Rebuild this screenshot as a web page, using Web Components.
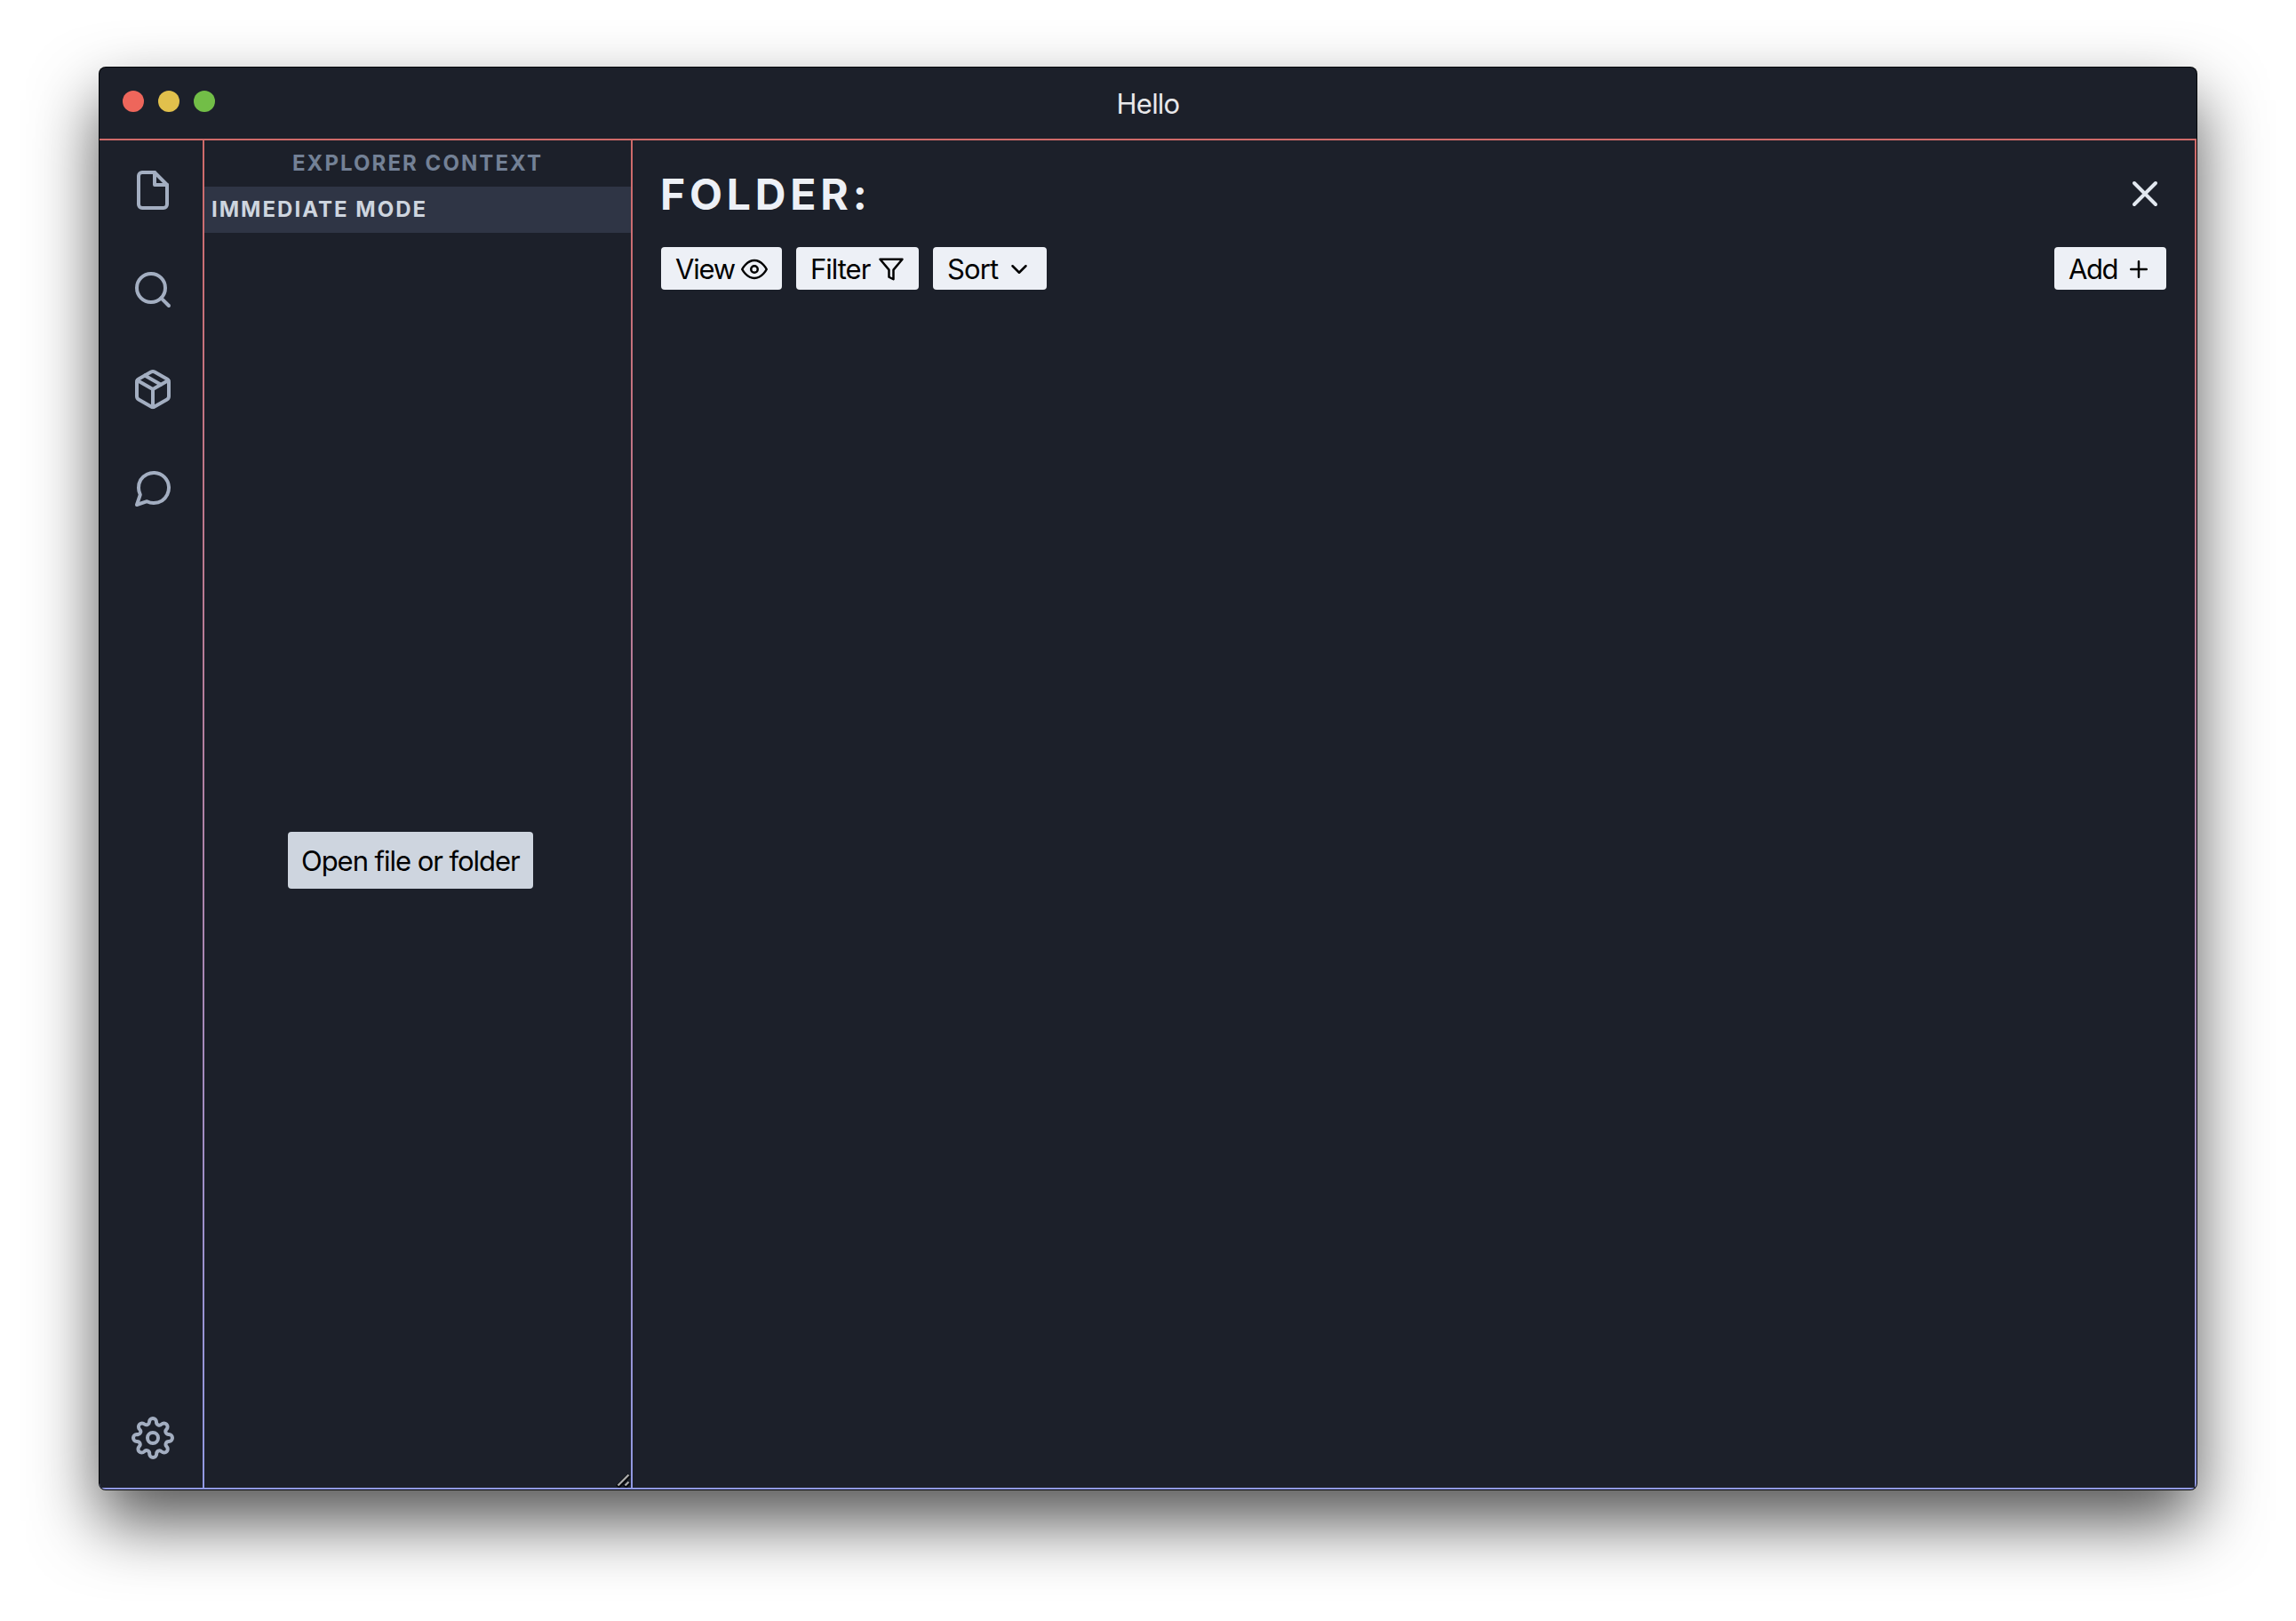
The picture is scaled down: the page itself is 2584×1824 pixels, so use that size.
<!DOCTYPE html>
<html lang="en"><head><meta charset="utf-8"><title>Hello</title>
<style>
html,body{margin:0;height:100%;background:#fff}
body{box-sizing:border-box;padding:76px 112px 148px;font-family:Inter,"Liberation Sans",sans-serif;font-size:31px;overflow:hidden}
</style></head><body>
<app-window></app-window>
<script>
const ICONS={
file:'<path d="M13 2H6a2 2 0 0 0-2 2v16a2 2 0 0 0 2 2h12a2 2 0 0 0 2-2V9z"/><path d="M13 2v7h7"/>',
search:'<circle cx="11" cy="11" r="8"/><path d="M21 21l-4.35-4.35"/>',
box:'<path d="M16.5 9.4l-9-5.19M21 16V8a2 2 0 0 0-1-1.73l-7-4a2 2 0 0 0-2 0l-7 4A2 2 0 0 0 3 8v8a2 2 0 0 0 1 1.73l7 4a2 2 0 0 0 2 0l7-4A2 2 0 0 0 21 16z"/><path d="M3.27 6.96L12 12.01l8.73-5.05M12 22.08V12"/>',
chat:'<path d="M21 11.5a8.38 8.38 0 0 1-.9 3.8 8.5 8.5 0 0 1-7.6 4.7 8.38 8.38 0 0 1-3.8-.9L3 21l1.9-5.7a8.38 8.38 0 0 1-.9-3.8 8.5 8.5 0 0 1 4.7-7.6 8.38 8.38 0 0 1 3.8-.9h.5a8.48 8.48 0 0 1 8 8z"/>',
gear:'<circle cx="12" cy="12" r="3"/><path d="M19.4 15a1.65 1.65 0 0 0 .33 1.82l.06.06a2 2 0 1 1-2.83 2.83l-.06-.06a1.65 1.65 0 0 0-2.8 1.17V21a2 2 0 0 1-4 0v-.09a1.65 1.65 0 0 0-2.91-1.26l-.06.06a2 2 0 1 1-2.83-2.83l.06-.06A1.65 1.65 0 0 0 3.09 14H3a2 2 0 0 1 0-4h.09A1.65 1.65 0 0 0 4.6 7.18l-.06-.06a2 2 0 1 1 2.83-2.83l.06.06A1.65 1.65 0 0 0 10 3.09V3a2 2 0 0 1 4 0v.09a1.65 1.65 0 0 0 2.82 1.26l.06-.06a2 2 0 1 1 2.83 2.83l-.06.06A1.65 1.65 0 0 0 20.91 10H21a2 2 0 0 1 0 4h-.09a1.65 1.65 0 0 0-1.51 1z"/>',
eye:'<path d="M1 12s4-8 11-8 11 8 11 8-4 8-11 8-11-8-11-8z"/><circle cx="12" cy="12" r="3"/>',
filter:'<path d="M22 3H2l8 9.46V19l4 2v-8.54z"/>',
down:'<path d="M6 9l6 6 6-6"/>',
plus:'<path d="M12 5v14M5 12h14"/>',
close:'<path d="M18 6L6 18M6 6l12 12"/>'};
function define(name,render){customElements.define(name,class extends HTMLElement{connectedCallback(){if(!this.shadowRoot)this.attachShadow({mode:'open'}).innerHTML=render(this)}})}
define('ui-icon',e=>`<style>:host{display:block;flex:none;width:var(--size,48px);height:var(--size,48px)}svg{display:block;width:100%;height:100%;overflow:visible;fill:none;stroke:currentColor;stroke-width:2;stroke-linecap:round;stroke-linejoin:round}</style><svg viewBox="0 0 24 24">${ICONS[e.getAttribute('name')]}</svg>`);
define('tool-button',e=>`<style>:host{display:flex;align-items:center;gap:8px;height:48px;padding:0 16px;border-radius:4px;box-sizing:border-box;background:#edf0f6;color:#000}span{width:var(--w);letter-spacing:var(--ls);white-space:nowrap}ui-icon{--size:30px;margin-top:2px}</style><span><slot></slot></span><ui-icon name="${e.getAttribute('icon')}"></ui-icon>`);
define('title-bar',()=>`<style>:host{display:grid;grid-template-columns:1fr auto 1fr;align-items:center;height:80px;flex:none;color:#e8e8ea}.l{display:flex;gap:16px;padding:0 0 4px 26px}i{width:24px;height:24px;border-radius:50%}span{letter-spacing:-.78px}</style><div class="l"><i style="background:#ee665b"></i><i style="background:#e1c04c"></i><i style="background:#72be47"></i></div><span><slot></slot></span>`);
define('activity-bar',()=>`<style>:host{display:flex;flex-direction:column;gap:64px;width:116px;box-sizing:border-box;padding:32px 0 32px 36px;color:#a3aec1}.end{margin-top:auto}</style><ui-icon name="file"></ui-icon><ui-icon name="search"></ui-icon><ui-icon name="box"></ui-icon><ui-icon name="chat"></ui-icon><ui-icon class="end" name="gear"></ui-icon>`);
define('explorer-pane',()=>`<style>:host{display:flex;flex-direction:column;position:relative;width:480px}header,.mode{height:52px;line-height:52px;font-size:24px;font-weight:700}header{text-align:center;color:#738196;letter-spacing:2.07px}.mode{background:#2f3545;color:#ced5df;padding-left:8px;letter-spacing:2.01px}.body{flex:1;display:flex;align-items:center;justify-content:center;padding-right:16px}button{font:inherit;white-space:nowrap;text-align:left;letter-spacing:-1.04px;border:0;border-radius:4px;width:276px;height:64px;padding:0 0 0 15px;background:#ced5df;color:#000}svg{position:absolute;right:0;bottom:0}</style>
<header>EXPLORER CONTEXT</header><div class="mode">IMMEDIATE MODE</div><div class="body"><button>Open file or folder</button></div><svg width="18" height="18" fill="none"><path d="M3 17L16 4M11 17l5-5" stroke="#06080c" stroke-width="5"/><path d="M3.5 15.5L15.5 3.5M11.5 15.5l4-4" stroke="#aaa" stroke-width="2.4"/></svg>`);
define('folder-view',()=>`<style>:host{display:flex;flex-direction:column;flex:1;padding:30px 32px;gap:30px}.h,.t{display:flex;align-items:center;justify-content:space-between}h1{margin:0 0 0 -1px;font-size:48px;line-height:60px;padding-top:2px;color:#edf0f6;letter-spacing:4.85px}.h ui-icon{color:#e2e8f0}.g{display:flex;gap:16px}.h{height:60px}</style>
<div class="h"><h1>FOLDER:</h1><ui-icon name="close"></ui-icon></div><div class="t"><div class="g"><tool-button icon="eye" style="--w:66px;--ls:-1.2px">View</tool-button><tool-button icon="filter" style="--w:68px;--ls:-1px">Filter</tool-button><tool-button icon="down" style="--w:58px;--ls:-.9px">Sort</tool-button></div><tool-button icon="plus" style="--w:56px;--ls:-1.4px">Add</tool-button></div>`);
define('app-window',()=>`<style>:host{display:flex;flex-direction:column;height:1600px;border-radius:7px;overflow:hidden;background:#1c202a;box-shadow:0 0 0 1px #05070a,0 36px 76px rgba(0,0,0,.68)}
main{flex:1;display:flex;padding:2px 2px 2px 0;background:linear-gradient(#cf6a69,#9199e3);gap:2px}main>*{background:#1c202a}</style><title-bar>Hello</title-bar><main><activity-bar></activity-bar><explorer-pane></explorer-pane><folder-view></folder-view></main>`);
</script></body></html>
